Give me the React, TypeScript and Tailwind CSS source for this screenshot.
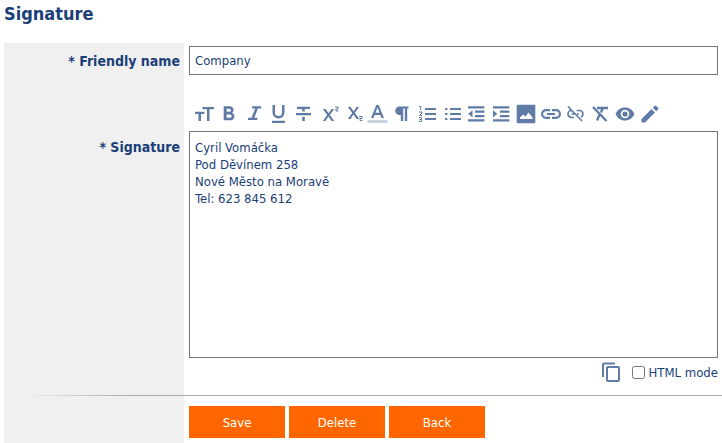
import { useState } from "react";
import type { ReactNode } from "react";

const TWO = "M0 0h3v2H1v2h2.5";

const tools: { name: string; icon: ReactNode }[] = [
  { name: "Font size", icon: <path d="M10.500 5H22v2.300h-4.500V19h-2.500V7.300h-4.500zM3 9.700h9.500V12H9v7H6.500v-7H3z" /> },
  {
    name: "Bold",
    icon: (
      <path d="M15 11c.9-.7 1.600-1.700 1.600-2.800 0-2.200-1.700-3.900-3.900-3.900H6.700v14h6.800c2.200 0 3.900-1.700 3.900-3.800 0-1.600-1-2.900-2.400-3.500zM9.700 6.800h2.700a1.500 1.500 0 0 1 0 3H9.700zm3.300 9H9.700v-3.300H13a1.650 1.650 0 0 1 0 3.300z" />
    ),
  },
  { name: "Italic", icon: <path d="M10 4.200h9.200v2.400h-3.300L12.300 15.700h3v2.400H6v-2.400h3.500l3.700-9.100H10z" /> },
  {
    name: "Underline",
    icon: (
      <path d="M12.500 16.500a6 6 0 0 0 6-6V3H16v7.500a3.500 3.500 0 0 1-7 0V3H6.500v7.500a6 6 0 0 0 6 6zM6 18.700h13V21H6z" />
    ),
  },
  { name: "Strikethrough", icon: <path d="M6 4.700h13V7h-5.200v2.500h-2.600V7H6zM5 11h15v2.200H5zM11.200 15h2.600v4h-2.600z" /> },
  {
    name: "Superscript",
    icon: (
      <>
        <path d="M6.800 7h2.800l3 4.300L15.600 7h2.600l-4.400 6 4.600 6h-2.800l-3.200-4.400L9.400 19H6.800l4.400-6z" />
        <path d={TWO} transform="translate(19 5)" fill="none" stroke="currentColor" />
      </>
    ),
  },
  {
    name: "Subscript",
    icon: (
      <>
        <path d="M6.800 5h2.800l3 4.300L15.600 5h2.600l-4.400 6 4.600 6h-2.800l-3.200-4.400L9.400 17H6.800l4.400-6z" />
        <path d={TWO} transform="translate(18 14.500)" fill="none" stroke="currentColor" />
      </>
    ),
  },
  {
    name: "Text color",
    icon: (
      <>
        <path d="M11.300 3h2.400L19 16h-2.500l-1.200-3.100H9.700L8.500 16H6zm-.8 7.800h4l-2-5.300z" />
        <path d="M2.400 18h20v3h-20z" opacity=".35" />
      </>
    ),
  },
  { name: "Paragraph", icon: <path d="M9.500 4.500H18.500v2H17.200V19h-2.400V6.500h-1.600V19h-2.400v-6H9.500a4.250 4.250 0 0 1 0-8.500z" /> },
  {
    name: "Numbered list",
    icon: (
      <>
        <path d="M10 6h11v2H10zM10 11h11v2H10zM10 16h11v2H10z" />
        <path
          d="M4 4.500h1.700V8M4 10h3v1L4.500 13.500H7M4 15.500h2.500v4H4M4.500 17.500h2"
          fill="none"
          stroke="currentColor"
        />
      </>
    ),
  },
  {
    name: "Bulleted list",
    icon: (
      <path d="M10 6h11v2H10zM10 11h11v2H10zM10 16h11v2H10zM5 6h2.400v2H5zM5 11h2.400v2H5zM5 16h2.400v2H5z" />
    ),
  },
  {
    name: "Decrease indent",
    icon: (
      <path d="M4 4.200h16.400v2.300H4zM11 8.500h9.400v2.300H11zM11 12.900h9.400v2.300H11zM4 17.200h16.400v2.300H4zM4.200 11.800l4.300-3.600v7.200z" />
    ),
  },
  {
    name: "Increase indent",
    icon: (
      <path d="M4 4.200h16.400v2.300H4zM11 8.500h9.400v2.300H11zM11 12.900h9.400v2.300H11zM4 17.200h16.400v2.300H4zM8.300 11.800L4 8.200v7.200z" />
    ),
  },
  {
    name: "Insert image",
    icon: (
      <path
        fillRule="evenodd"
        d="M3.500 2.700h17a.8.8 0 0 1 .8.8v17a.8.8 0 0 1-.8.8h-17a.8.8 0 0 1-.8-.8v-17a.8.8 0 0 1 .8-.8zM6 17h12.500v-1.500L14.500 10.500l-3 4-2.500-2L6 15.500z"
      />
    ),
  },
  {
    name: "Insert link",
    icon: (
      <path d="M4.200 12A2.800 2.800 0 0 1 7 9.200h4V7H7a5 5 0 0 0 0 10h4v-2.200H7A2.800 2.800 0 0 1 4.200 12zM8 13.100h8v-2.200H8zm9-6.100h-4v2.200h4a2.800 2.800 0 0 1 0 5.600h-4V17h4a5 5 0 0 0 0-10z" />
    ),
  },
  {
    name: "Remove link",
    icon: (
      <path
        d="M5 4.500l14 14.500M8.500 8.500a3.500 3.500 0 0 0 0 7H11M8.500 12h3M13.500 8.500h3a3.500 3.500 0 0 1 1.500 6.600M14 12h2"
        fill="none"
        stroke="currentColor"
        strokeWidth="1.700"
      />
    ),
  },
  {
    name: "Clear formatting",
    icon: (
      <path
        d="M5 5l13.500 14M9 6h11M14.800 6l-1.800 4.500M11.500 12.500L9 18.500"
        fill="none"
        stroke="currentColor"
        strokeWidth="2.300"
      />
    ),
  },
  {
    name: "Preview",
    icon: (
      <path d="M12 5.500c-4.300 0-8 2.700-9.500 6.500 1.500 3.800 5.200 6.500 9.500 6.500s8-2.700 9.500-6.500C20 8.200 16.300 5.500 12 5.500zm0 10.800a4.300 4.300 0 1 1 0-8.600 4.300 4.300 0 0 1 0 8.600zm0-6.900a2.600 2.600 0 1 0 0 5.200 2.600 2.600 0 0 0 0-5.200z" />
    ),
  },
  {
    name: "Edit",
    icon: (
      <path d="M3.500 17v3.500H7L17 10.500 13.500 7zM20.200 7.300a1 1 0 0 0 0-1.400l-2.100-2.100a1 1 0 0 0-1.400 0L14.800 5.700l3.500 3.500z" />
    ),
  },
];

const actions = ["Save", "Delete", "Back"];

const App = () => {
  const [name, setName] = useState("Company");
  const [signature, setSignature] = useState(
    "Cyril Vomáčka\nPod Děvínem 258\nNové Město na Moravě\nTel: 623 845 612"
  );
  const [htmlMode, setHtmlMode] = useState(false);

  return (
    <main className="bg-white font-['Tahoma','DejaVu_Sans_Condensed','Noto_Sans',sans-serif] text-[13px] leading-[17px] text-[#1a3e78]">
      <h1 className="px-1 pt-[2px] pb-[18px] text-lg leading-[23px] font-bold">Signature</h1>
      <form className="pl-1" onSubmit={(e) => e.preventDefault()}>
        <div className="flex">
          <div className="w-[180px] shrink-0 bg-[#f0f0f0] pt-[10px] pr-1 text-right text-sm leading-[17px] font-bold">
            <label htmlFor="friendly-name">* Friendly name</label>
          </div>
          <div className="flex-1 pt-[3px] pr-1 pb-[27px] pl-[5px]">
            <input
              id="friendly-name"
              type="text"
              value={name}
              onChange={(e) => setName(e.target.value)}
              className="block h-[29px] w-full border border-[#767676] bg-white px-[5px]"
            />
          </div>
        </div>

        <div className="flex">
          <div className="w-[180px] shrink-0 bg-[#f0f0f0] pt-[37px] pr-1 text-right text-sm leading-[17px] font-bold">
            <label htmlFor="signature">* Signature</label>
          </div>
          <div className="flex-1 pr-1 pl-[5px]">
            <div className="flex max-w-[473px] justify-between pb-[5px] pl-[3px] text-[#5f7ba6]">
              {tools.map((tool) => (
                <button key={tool.name} type="button" aria-label={tool.name}>
                  <svg viewBox="0 0 24 24" className="size-6" fill="currentColor" aria-hidden="true">
                    {tool.icon}
                  </svg>
                </button>
              ))}
            </div>
            <textarea
              id="signature"
              value={signature}
              onChange={(e) => setSignature(e.target.value)}
              className="block h-[227px] w-full resize-none border border-[#767676] bg-white px-[5px] py-[7px]"
            />
            <div className="flex items-center justify-end pt-1 pb-3">
              <button type="button" aria-label="Copy" className="mr-[11px] text-[#5f7ba6]">
                <svg viewBox="0 0 20 20" className="size-5" fill="none" stroke="currentColor" strokeWidth="2">
                  <path d="M2 15V2.500a1 1 0 0 1 1-1h11" />
                  <rect x="6" y="5" width="12" height="14" rx="1" />
                </svg>
              </button>
              <input
                id="html-mode"
                type="checkbox"
                checked={htmlMode}
                onChange={(e) => setHtmlMode(e.target.checked)}
                className="mr-1 size-[13px]"
              />
              <label htmlFor="html-mode">HTML mode</label>
            </div>
          </div>
        </div>

        <div className="relative flex">
          <div className="absolute top-px right-0 left-4 h-px bg-linear-to-r from-transparent to-[#a9adb4] to-15%"></div>
          <div className="w-[180px] shrink-0 bg-[#f0f0f0]"></div>
          <div className="flex flex-1 gap-1 pt-[12px] pb-[5px] pl-[5px]">
            {actions.map((action) => (
              <button
                key={action}
                type={action === "Save" ? "submit" : "button"}
                className="h-8 w-24 bg-[#ff6600] text-white"
              >
                {action}
              </button>
            ))}
          </div>
        </div>
      </form>
    </main>
  );
};

export default App;
